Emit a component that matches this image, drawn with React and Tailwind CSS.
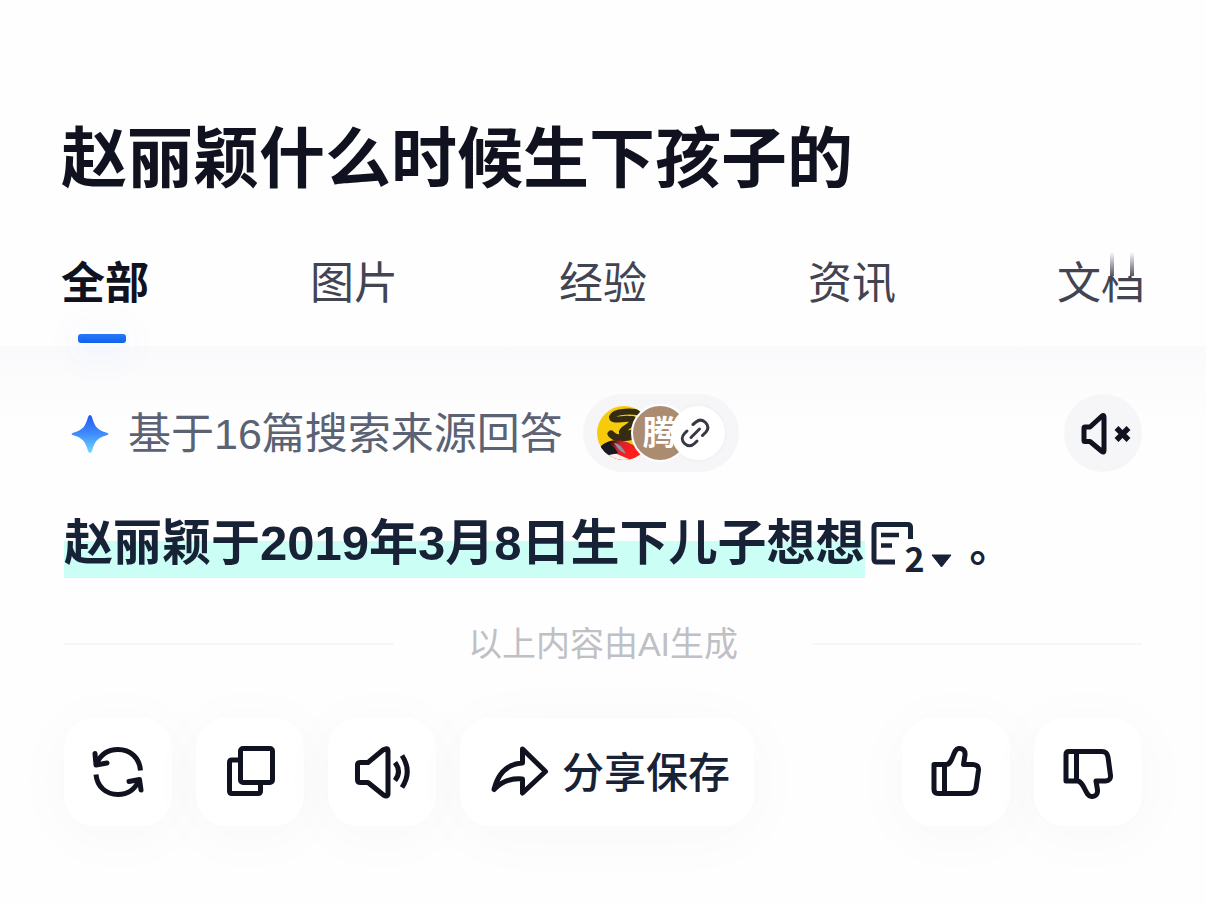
import React from 'react';

const ink = '#11121f';

function Icon({ children, className = 'size-[60px]', width = 5, viewBox = '0 0 60 60', color = ink }) {
  return (
    <svg
      aria-hidden="true"
      className={`shrink-0 ${className}`}
      viewBox={viewBox}
      fill="none"
      stroke={color}
      strokeWidth={width}
      strokeLinejoin="round"
    >
      {children}
    </svg>
  );
}

function RefreshIcon() {
  return (
    <Icon>
      <path d="M52.500 28.500 C51.500 15.500 42 7.500 30 7.500 C19 7.500 12 13.500 8.500 22" />
      <path d="M7 11.500 L8 23 L19 21" strokeLinecap="round" />
      <path d="M8 32.500 C9 44.500 18 52.500 30 52.500 C40 52.500 47 47 51 38.500" />
      <path d="M41 39.500 L51.500 37.500 L53 48" strokeLinecap="round" />
    </Icon>
  );
}

function CopyIcon() {
  return (
    <Icon>
      <rect x="20.500" y="6.500" width="32" height="34" rx="2.500" />
      <path d="M20.500 18 H12 Q9.500 18 9.500 20.500 V49 Q9.500 51.500 12 51.500 H38 Q40.500 51.500 40.500 49 V40.500" />
    </Icon>
  );
}

function SpeakerIcon() {
  return (
    <Icon>
      <path d="M8.500 20.500 H16 L31 8 Q36 5 36 9 V51.500 Q36 55.500 31.500 53 L16 40.500 H8.500 Q5.500 40.500 5.500 38 V23 Q5.500 20.500 8.500 20.500 Z" />
      <path d="M43 20.500 Q50 29.500 43 38.500" />
      <path d="M50 13.500 Q60.500 29.500 50 45.500" />
    </Icon>
  );
}

function ShareIcon() {
  return (
    <Icon>
      <path d="M31.500 7 L54.500 29.500 L31.500 51 V37 C20 36 10 40 3 47.500 C7 31 16 22 31.500 21 Z" />
    </Icon>
  );
}

function ThumbUpIcon() {
  return (
    <Icon>
      <path d="M8 22.500 H20 C27 22.500 27 7 32.500 6.500 C37 6 39.500 9 39 13 L37.500 22.500 H47 Q53 23 52.500 28 L50 46 Q49 51.500 43 51.500 H12 Q8 51.500 8 47.500 Z" />
      <path d="M18.500 22.500 V51.500" />
    </Icon>
  );
}

function ThumbDownIcon() {
  return (
    <Icon>
      <path d="M8 39 H20 C27 41 27 54 33.500 54.500 C37.500 55 40 52 39.500 48 L38 39 H47.500 Q53 38.500 52.500 33.500 L50 15 Q49 9.500 44 9.500 H11 Q8 9.500 8 12.500 Z" />
      <path d="M18.500 9.500 V39" />
    </Icon>
  );
}

function MutedIcon() {
  return (
    <Icon viewBox="0 0 54 46" className="h-[46px] w-[54px]" width={5}>
      <path d="M7 17 H12 L24 6 Q26 4.500 26 7 V40.500 Q26 43 24 41.500 L12 31.500 H7 Q6 31.500 6 30.500 V18 Q6 17 7 17 Z" />
      <path d="M38.500 18 L50.500 30 M50.500 18 L38.500 30" strokeWidth="5.500" />
    </Icon>
  );
}

function Sparkle() {
  return (
    <svg aria-hidden="true" className="size-[40px] shrink-0" viewBox="0 0 40 40">
      <defs>
        <linearGradient id="spark" x1="0" y1="0" x2="0" y2="1">
          <stop offset="0" stopColor="#2458f5" />
          <stop offset="0.5" stopColor="#3f8cfb" />
          <stop offset="1" stopColor="#72d8ff" />
        </linearGradient>
      </defs>
      <path
        d="M18 4 Q20 0 22 4 C24.500 13 27 17 36 19.500 Q41 21 36 22.500 C27 25 24.500 29 22 38 Q20 42 18 38 C15.500 29 13 25 4 22.500 Q-1 21 4 19.500 C13 17 15.500 13 18 4 Z"
        fill="url(#spark)"
      />
    </svg>
  );
}

function SiteLogo() {
  return (
    <svg aria-hidden="true" className="size-[54px] shrink-0" viewBox="0 0 54 54">
      <defs>
        <clipPath id="site"><circle cx="27" cy="27" r="27" /></clipPath>
        <linearGradient id="flame" x1="0" y1="0" x2="1" y2="0.3">
          <stop offset="0.25" stopColor="#1c1512" />
          <stop offset="0.45" stopColor="#d3222b" />
          <stop offset="0.75" stopColor="#ff1d1d" />
        </linearGradient>
      </defs>
      <g clipPath="url(#site)">
        <rect width="54" height="54" fill="#f5cb0c" />
        <path d="M48 8 C36 4 17 5 15 11 C15 17 30 10 37 14" fill="none" stroke="#352c12" strokeWidth="6" strokeLinecap="round" />
        <path d="M36 13 C37 20 24 22 25 27 C30 29 36 26 44 25" fill="none" stroke="#352c12" strokeWidth="6" strokeLinecap="round" />
        <path d="M14 28 C19 34 27 32 38 30" fill="none" stroke="#352c12" strokeWidth="7" strokeLinecap="round" />
        <path d="M3 41 C13 31 27 34 34 38 L54 46 V54 H0 Z" fill="url(#flame)" />
        <path d="M3 48 L20 48 L34 54 H5 Z" fill="#f7f1ee" />
        <path d="M17 37 C22 37 26 42 29 48 C24 46 20 42 17 37 Z" fill="#8e969e" />
        <path d="M3 43 C9 36 15 36 21 47 L8 50 Z" fill="#161a20" />
      </g>
    </svg>
  );
}

function ActionButton({ label, children }) {
  return (
    <button
      type="button"
      aria-label={label}
      className="flex size-[108px] items-center justify-center rounded-[30px] bg-white shadow-[0_8px_64px_rgba(40,50,110,0.03)]"
    >
      {children}
    </button>
  );
}

export default function App() {
  const tabs = ['图片', '经验', '资讯'];
  return (
    <div className="min-h-screen bg-[#fefefe] font-['Liberation_Sans','Noto_Sans_CJK_SC',sans-serif] text-[#11121f]">
      <header className="pt-[119px]">
        <h1 className="px-[61px] text-[66px] leading-[80px] font-bold whitespace-nowrap">赵丽颖什么时候生下孩子的</h1>
        <nav className="mt-[53px] flex h-[94px] items-start justify-between px-[61px] text-[44px] leading-[64px] text-[#424452]">
          <a href="#all" aria-current="page" className="flex flex-col items-center font-bold text-[#11121f]">
            全部
            <span className="mt-[18px] mr-[6px] h-[9px] w-12 rounded-[3px] bg-linear-to-b from-[#2878f8] to-[#0f62ef] shadow-[0_4px_40px_6px_rgba(30,100,250,0.06)]" />
          </a>
          {tabs.map((tab) => (
            <a key={tab} href={`#${tab}`}>{tab}</a>
          ))}
          <a href="#docs" className="relative">
            文档
            <span className="absolute top-0 right-0 flex h-6 w-[43px] gap-4 bg-[#fefefe] pl-2">
              <span className="h-full w-1 bg-linear-to-b from-transparent to-[#555663]" />
              <span className="h-full w-1 bg-linear-to-b from-transparent to-[#555663]" />
            </span>
          </a>
        </nav>
      </header>

      <main className="bg-[linear-gradient(#fafafc,#fefefe_80px)] px-16 pt-12 pb-[78px]">
        <div className="flex h-[78px] items-center">
          <div className="flex items-center gap-[18px] pl-[6px]">
            <Sparkle />
            <p className="pt-[2px] text-[43px] leading-[60px] whitespace-nowrap text-[#5a6274]">基于16篇搜索来源回答</p>
          </div>
          <button type="button" aria-label="搜索来源" className="ml-5 flex h-[78px] items-center rounded-full bg-[#f6f6f9] pr-[14px] pl-[14px]">
            <SiteLogo />
            <span className="-ml-5 flex size-[58px] items-center overflow-hidden rounded-full border-2 border-white bg-[#ab8c70] pl-[10px] text-[34px] leading-[54px] font-bold text-white">腾</span>
            <span className="-ml-[18px] flex size-[54px] items-center justify-center rounded-full bg-white pr-[6px] shadow-[0_0_4px_rgba(30,30,60,0.05)]">
              <Icon viewBox="0 0 30 30" className="size-[30px]" width={3} color="#383944">
                <g strokeLinecap="round">
                  <path d="M13 6.500 L16 4 C19 1.500 22.500 1.500 25.500 4.500 C28.500 7.500 28.500 11 26 14 L22.500 17.500" />
                  <path d="M7 13 L4.500 15.500 C1.500 18.500 1.500 22.500 4.500 25.500 C7.500 28.500 11.500 28.500 14.500 25.500 L17 23" />
                  <path d="M11 19.500 L19.500 11" />
                </g>
              </Icon>
            </span>
          </button>
          <button type="button" aria-label="静音" className="ml-auto flex size-[78px] items-center justify-center rounded-full bg-[#f6f6f9] pl-1">
            <MutedIcon />
          </button>
        </div>

        <div className="mt-9 flex h-[70px] items-start text-[49px] leading-[70px] font-bold whitespace-nowrap text-[#182236]">
          <p className="bg-[linear-gradient(transparent_33px,#cbfff6_33px)]">赵丽颖于2019年3月8日生下儿子想想</p>
          <button type="button" aria-label="2条引用" className="ml-[6px] flex h-[70px] items-start pt-3">
            <Icon viewBox="0 0 44 48" className="h-[48px] w-[44px]" width={5} color="#182236">
              <path d="M39.500 19 V7.500 Q39.500 4.500 36.500 4.500 H6 Q3 4.500 3 7.500 V39 Q3 42 6 42 H24" />
              <path d="M10 15 H28 M10 25.500 H21" strokeWidth="4.500" />
            </Icon>
            <span className="-ml-[10px] pt-[18px] font-['Noto_Sans_CJK_SC',sans-serif] text-[34px] leading-[40px] font-bold">2</span>
            <svg aria-hidden="true" className="mt-[34px] ml-[6px] h-[14px] w-[21px]" viewBox="0 0 21 14"><path d="M1 1 H20 L10.500 13 Z" fill="#182236" stroke="#182236" strokeLinejoin="round" /></svg>
          </button>
          <span className="ml-[18px] pt-1 text-[42px] font-bold">。</span>
        </div>

        <div className="mt-[42px] flex h-12 items-center gap-[74px] text-[34px] leading-[48px] text-[#bfc0c5]">
          <span className="h-[2px] flex-1 bg-[#f7f7f8]" />
          <p className="whitespace-nowrap">以上内容由AI生成</p>
          <span className="h-[2px] flex-1 bg-[#f7f7f8]" />
        </div>

        <div className="mt-[50px] flex items-center justify-between">
          <div className="flex gap-6">
            <ActionButton label="重新生成"><RefreshIcon /></ActionButton>
            <ActionButton label="复制"><CopyIcon /></ActionButton>
            <ActionButton label="朗读"><SpeakerIcon /></ActionButton>
            <button type="button" className="flex h-[108px] items-center gap-[11px] rounded-[30px] bg-white pr-[24px] pl-[31px] text-[42px] leading-[60px] font-medium whitespace-nowrap text-[#182236] shadow-[0_8px_64px_rgba(40,50,110,0.03)]">
              <ShareIcon />
              <span className="pt-[3px]">分享保存</span>
            </button>
          </div>
          <div className="flex gap-6">
            <ActionButton label="赞"><ThumbUpIcon /></ActionButton>
            <ActionButton label="踩"><ThumbDownIcon /></ActionButton>
          </div>
        </div>
      </main>
    </div>
  );
}
